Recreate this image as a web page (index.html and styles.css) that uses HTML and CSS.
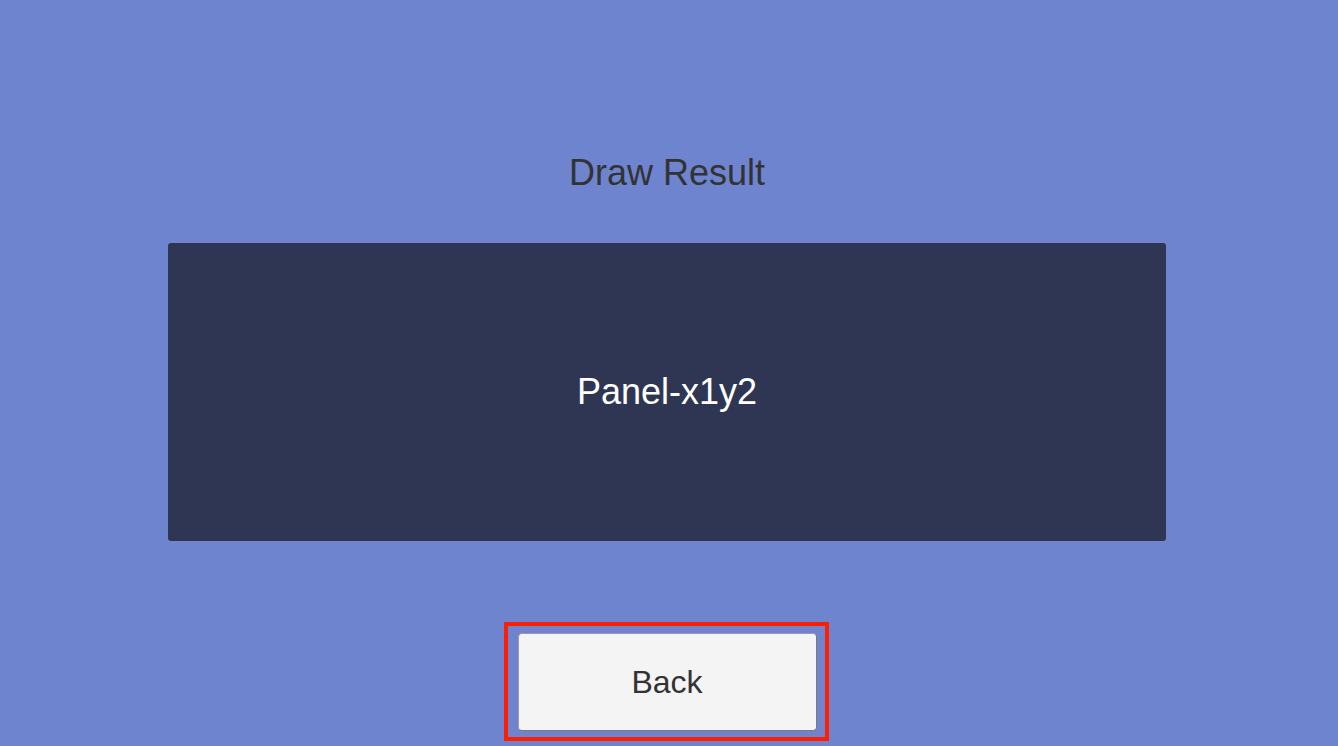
FILE: index.html
```html
<!DOCTYPE html>
<html>
<head>
<meta charset="utf-8">
<link rel="stylesheet" href="styles.css">
</head>
<body>
<div class="screen">
  <div class="title">Draw Result</div>
  <div class="panel"><span class="panel-label">Panel-x1y2</span></div>
  <div class="button-wrap">
    <button class="back-btn">Back</button>
    <div class="highlight"></div>
  </div>
</div>
</body>
</html>
```
FILE: styles.css
```css
html, body {
  margin: 0;
  padding: 0;
  background: #6e84cf;
  width: 1338px;
  height: 746px;
  overflow: hidden;
}
.screen {
  width: 1334px;
  display: flex;
  flex-direction: column;
  align-items: center;
  padding-top: 152px;
  font-family: "Liberation Sans", Arial, sans-serif;
}
.title {
  height: 42px;
  line-height: 42px;
  font-size: 36px;
  color: #333333;
  margin-bottom: 49px;
}
.panel {
  width: 998px;
  height: 298px;
  background: #2f3654;
  border-radius: 3px;
  display: flex;
  align-items: center;
  justify-content: center;
  margin-bottom: 92px;
}
.panel-label {
  font-size: 36px;
  color: #ffffff;
}
.button-wrap {
  position: relative;
}
.back-btn {
  width: 299px;
  height: 98px;
  box-sizing: border-box;
  background: #f4f4f4;
  border: 1px solid #9a9aa6;
  border-right-color: #7a7a86;
  border-bottom-color: #7a7a86;
  border-radius: 4px;
  font-family: "Liberation Sans", Arial, sans-serif;
  font-size: 32px;
  color: #333333;
  padding: 0;
  display: block;
}
.highlight {
  position: absolute;
  left: -14px;
  top: -11px;
  width: 325px;
  height: 119px;
  box-sizing: border-box;
  border: 4px solid #ff1e00;
  pointer-events: none;
}
```
